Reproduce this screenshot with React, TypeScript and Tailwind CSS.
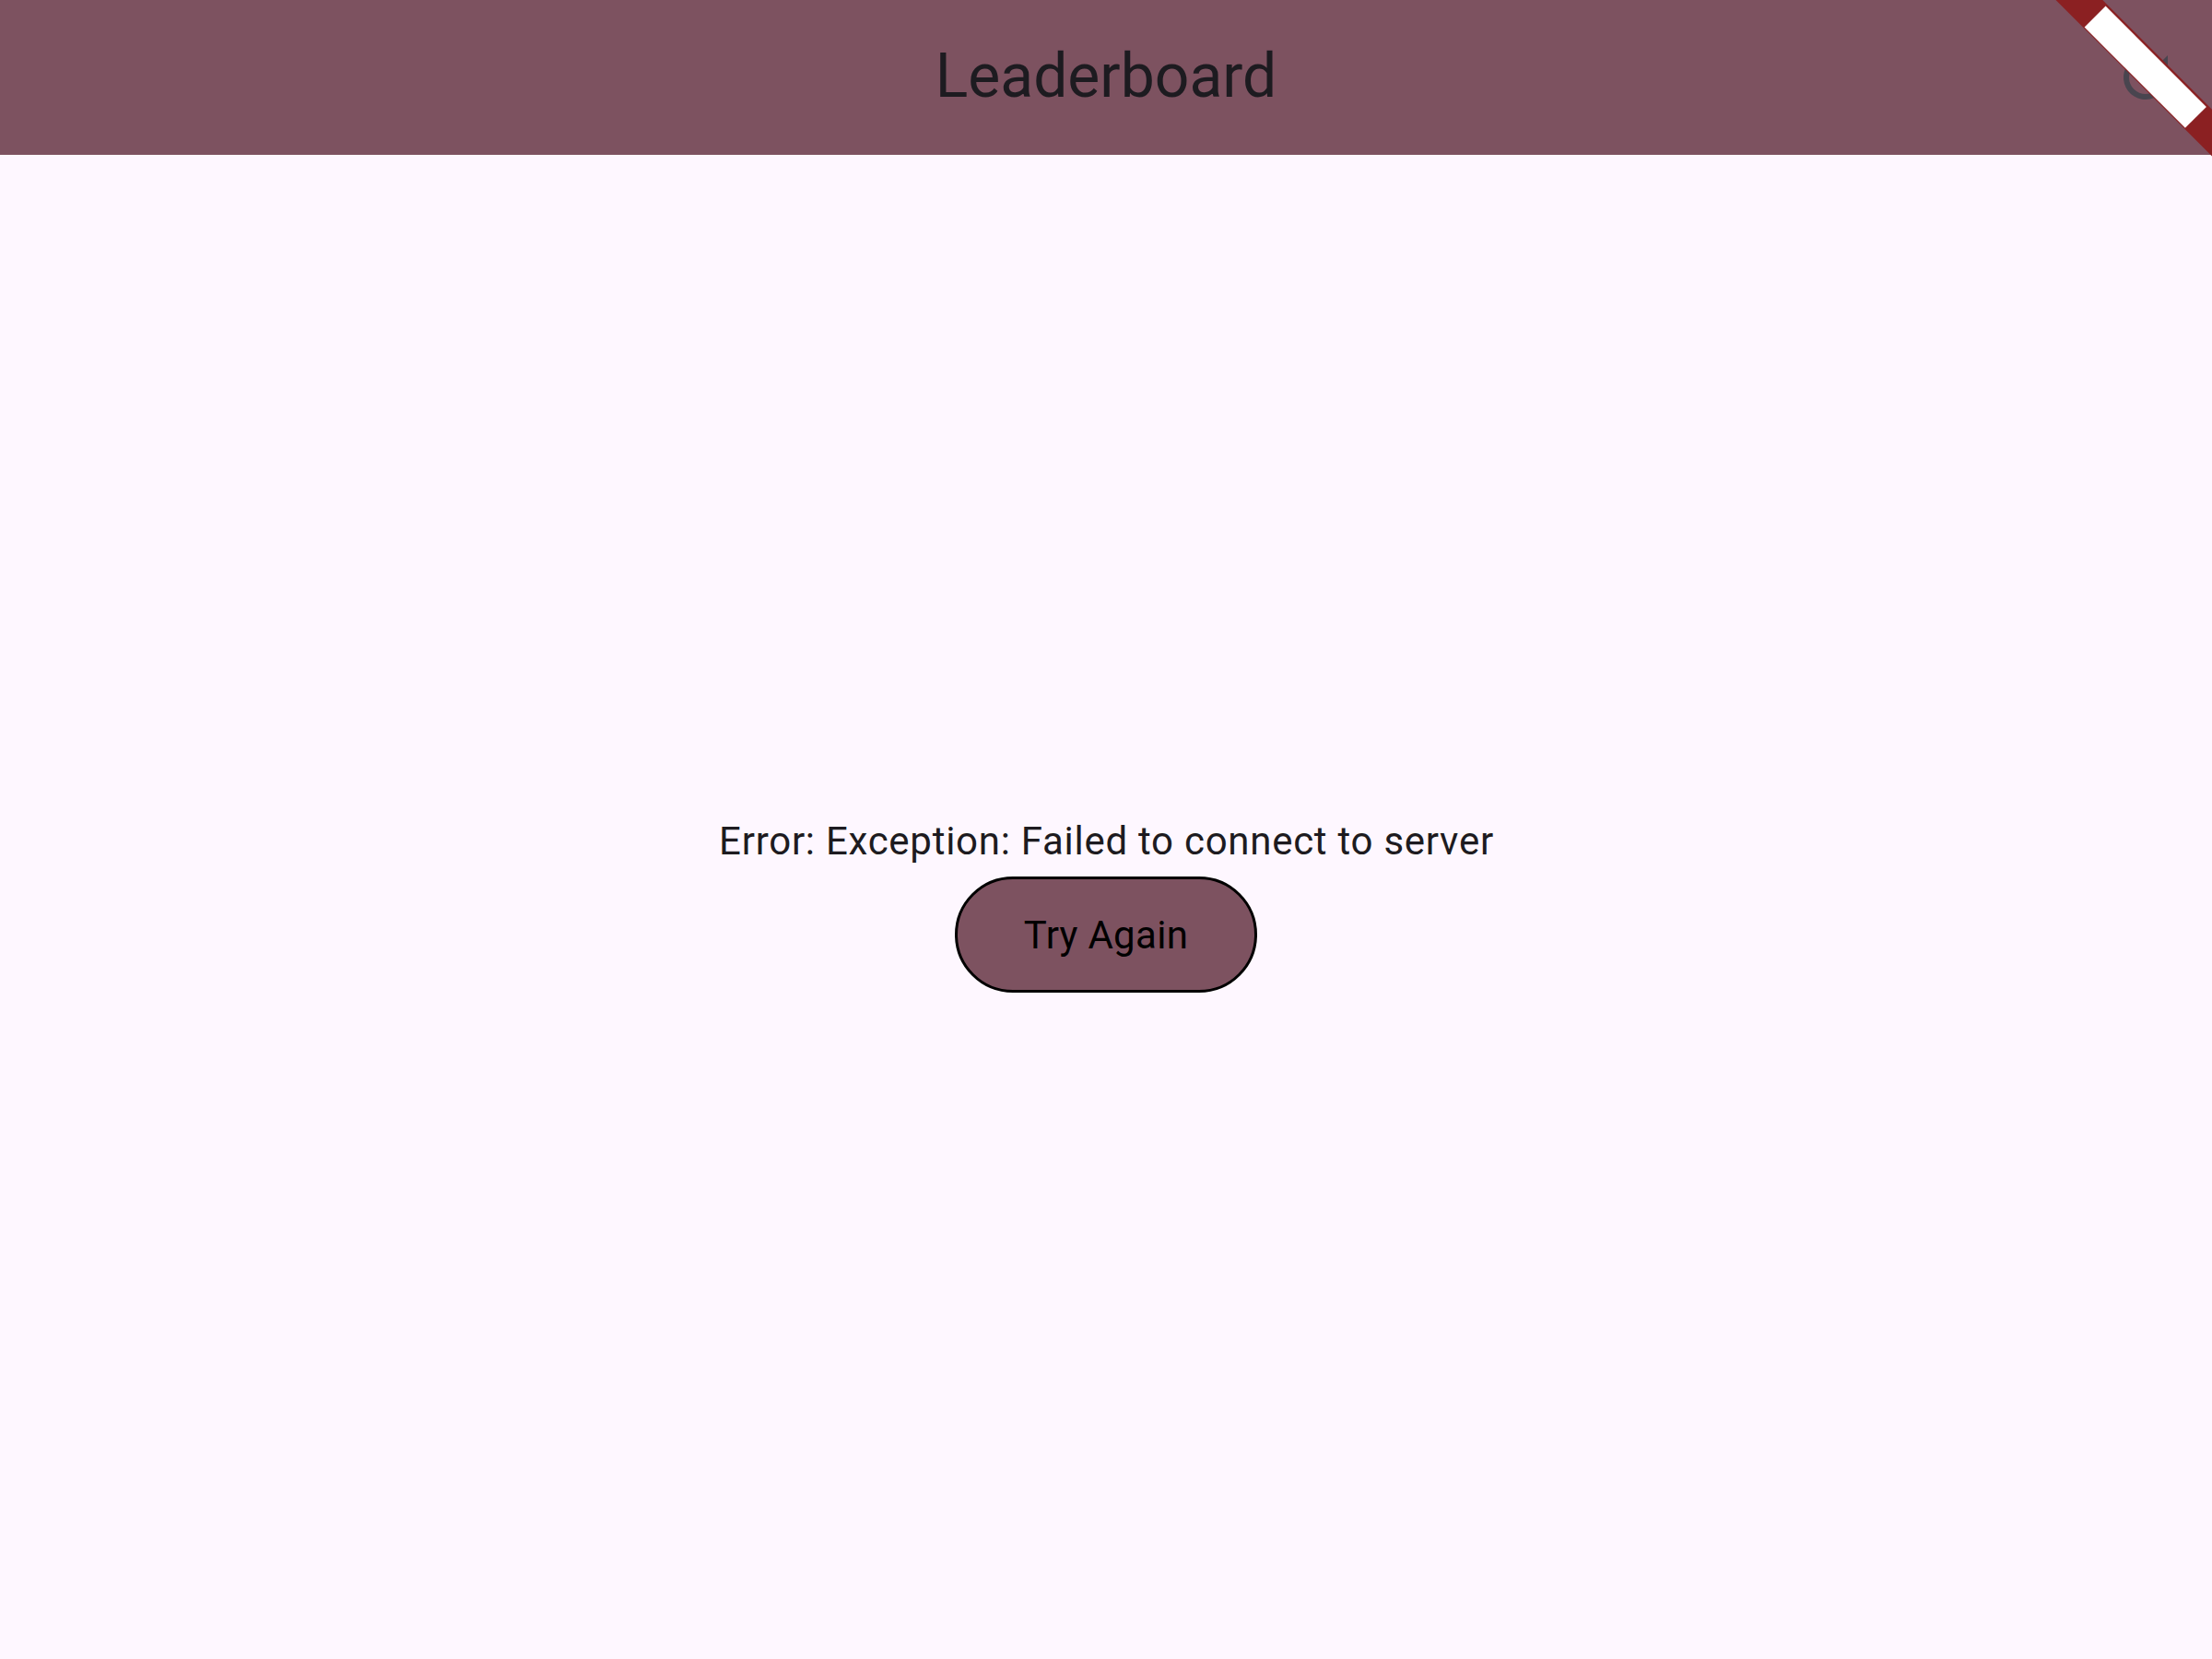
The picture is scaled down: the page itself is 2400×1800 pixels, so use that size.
export default function App() {
  return (
    <div className="relative flex h-[1800px] w-[2400px] flex-col overflow-hidden bg-[#fef7ff] font-['Roboto',sans-serif]">
      <header className="relative flex h-[168px] items-center justify-center bg-[#7d5260]">
        <h1 className="-mt-[2px] text-[66px] leading-[84px] font-normal text-[#1d1b20]">Leaderboard</h1>
        <svg className="absolute top-[48px] right-[36px] size-[72px]" viewBox="0 0 24 24" fill="#49454f">
          <path d="M17.65 6.35A7.958 7.958 0 0 0 12 4a8 8 0 1 0 7.73 10h-2.08A5.99 5.99 0 0 1 12 18a6 6 0 1 1 0-12c1.66 0 3.14.69 4.22 1.78L13 11h7V4l-2.35 2.35z" />
        </svg>
      </header>
      <main className="flex flex-1 flex-col items-center justify-center">
        <p className="pt-[2px] pl-px text-[42px] leading-[58px] tracking-[0.73px] text-[#1d1b20]">
          Error: Exception: Failed to connect to server
        </p>
        <button className="my-[9px] flex h-[126px] w-[328px] items-center justify-center rounded-full border-[3px] border-black bg-[#7d5260] text-[42px] tracking-[0.3px] text-black">
          Try Again
        </button>
      </main>
      {/* Corner ribbon */}
      <svg className="absolute top-0 right-0 h-[170px] w-[170px]" viewBox="0 0 170 170">
        <path d="M0.5 0H51.3L170 118.7V169.5Z" fill="#8b2022" />
        <path d="M54.6 6.6L163.9 115.9L140.9 138.8L31.6 29.5Z" fill="#fff" />
      </svg>
    </div>
  );
}
